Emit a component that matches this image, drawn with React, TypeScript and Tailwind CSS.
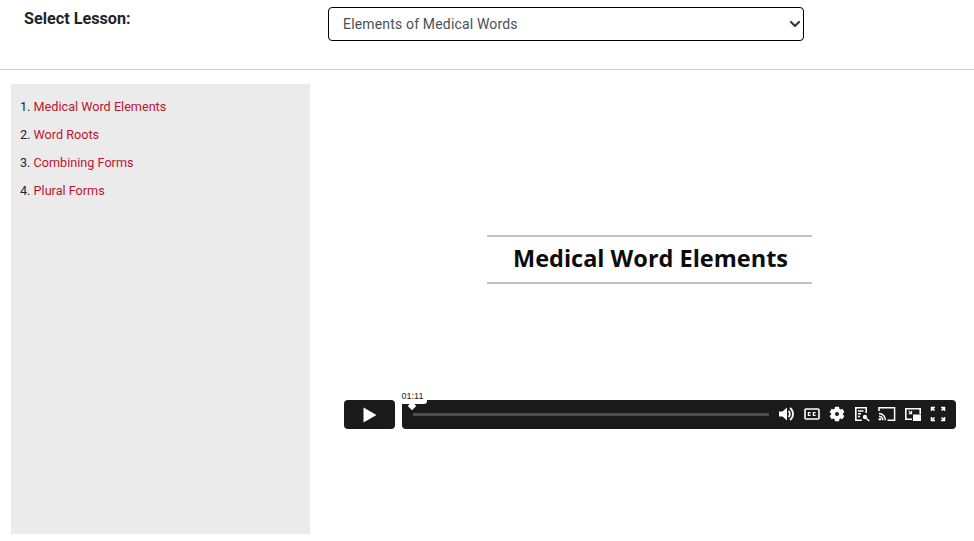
import { ChevronDown } from 'lucide-react';

const LESSONS = ['Medical Word Elements', 'Word Roots', 'Combining Forms', 'Plural Forms'];

function ControlIcons() {
  return (
    <div className="mb-[1px] flex items-center gap-[5px] pr-[8px] text-white">
      {/* volume */}
      <svg width="20" height="20" viewBox="0 0 20 20" fill="none">
        <path d="M2 7.5h3.5L10 3.5v13L5.5 12.5H2z" fill="white" />
        <path d="M11.5 7a4 4 0 0 1 0 6" stroke="white" strokeWidth="1.8" />
        <path d="M13 4a7.5 7.5 0 0 1 0 12" stroke="white" strokeWidth="1.8" />
      </svg>
      {/* captions */}
      <svg width="20" height="20" viewBox="0 0 20 20" fill="none">
        <rect x="3" y="5" width="14" height="10" rx="1" stroke="white" strokeWidth="1.6" />
        <path d="M8.6 8.6H6.4v2.8h2.2M13.6 8.6h-2.2v2.8h2.2" stroke="white" strokeWidth="1.2" />
      </svg>
      {/* settings */}
      <svg width="20" height="20" viewBox="0 0 20 20">
        <path
          fillRule="evenodd"
          d="M8 2.8h4l.4 2 1 .6 2-.7 2 3.4-1.6 1.3v1.2l1.6 1.3-2 3.4-2-.7-1 .6-.4 2H8l-.4-2-1-.6-2 .7-2-3.4 1.6-1.3V9.4L2.600 8.100l2-3.400 2 .7 1-.6zM10 8a2 2 0 1 0 0 4 2 2 0 0 0 0-4z"
          fill="white"
        />
      </svg>
      {/* transcript */}
      <svg width="20" height="20" viewBox="0 0 20 20" fill="none">
        <path d="M14.2 9V3.800H3.800v12.400h6" stroke="white" strokeWidth="1.6" />
        <path d="M6 7h5.500M6 9.800h3M6 12.500h2" stroke="white" strokeWidth="1.5" />
        <circle cx="13" cy="13" r="2.200" fill="white" />
        <path d="M14.500 14.500l2.800 2.500" stroke="white" strokeWidth="1.6" />
      </svg>
      {/* cast */}
      <svg width="20" height="20" viewBox="0 0 20 20" fill="none">
        <path d="M2 7V3.800h15.600v12.400H10.500" stroke="white" strokeWidth="1.5" />
        <path d="M2 9.400a6.600 6.600 0 0 1 6.400 6.800M2 12.200a4 4 0 0 1 3.800 4" stroke="white" strokeWidth="1.5" />
        <circle cx="2.900" cy="15.300" r="1.300" fill="white" />
      </svg>
      {/* picture in picture */}
      <svg width="20" height="20" viewBox="0 0 20 20" fill="none" className="ml-[1px]">
        <path d="M9 15.200H2.800V4.800h14.400V10" stroke="white" strokeWidth="1.600" />
        <rect x="10" y="10.500" width="8" height="6.500" fill="white" />
        <path d="M5.800 7l2.600 2.400M8.600 6.800v2.800H5.800" stroke="white" strokeWidth="1.100" />
      </svg>
      {/* fullscreen */}
      <svg width="20" height="20" viewBox="0 0 20 20" fill="none" stroke="white" strokeWidth="1.500">
        <path d="M3.500 7V3.500H7M3.500 3.500l3 3M16.500 7V3.500H13M16.500 3.500l-3 3M3.500 13v3.500H7M3.500 16.500l3-3M16.500 13v3.500H13M16.500 16.500l-3-3" />
      </svg>
    </div>
  );
}

function VideoPlayer() {
  return (
    <div className="relative h-[450px] flex-1 bg-white">
      <div className="ml-[177px] mt-[151px] flex h-[49px] w-[325px] items-center justify-center border-y-2 border-[#c2c2c2]">
        <span className="mb-[3px] ml-[2px] font-['Open_Sans',sans-serif] text-[23.5px] font-bold leading-[44px] text-[#0c0c0c]">Medical Word Elements</span>
      </div>

      <div className="absolute left-[34px] top-[316px] flex w-[612px] gap-[7px]">
        <button className="flex h-[29px] w-[51px] items-center justify-center rounded-[4px] bg-[#1a1a1a]">
          <svg width="14" height="16" viewBox="0 0 14 16">
            <path d="M0.5 0.5L13.5 8L0.5 15.5z" fill="white" />
          </svg>
        </button>
        <div className="relative flex h-[29px] flex-1 items-center rounded-[4px] bg-[#1a1a1a] pl-[11px]">
          <div className="h-[3px] flex-1 bg-[#4d4d4d]" />
          <div className="ml-[8px]">
            <ControlIcons />
          </div>
          {/* time tooltip */}
          <div className="absolute left-[-4px] top-[-10px] flex h-[14px] w-[29px] items-center justify-center rounded-b-[3px] bg-white font-['Liberation_Sans',sans-serif] text-[9px] text-[#222]">
            01:11
          </div>
          <div className="absolute left-[7px] top-[3px] h-[6px] w-[6px] rotate-45 bg-white" />
        </div>
      </div>
    </div>
  );
}

export default function App() {
  return (
    <div className="min-h-[541px] bg-white font-['Roboto',sans-serif]">
      <div className="flex h-[70px] border-b border-[#cccccc] pl-[24px] pt-[7px]">
        <label className="w-[304px] text-[16.2px] font-bold leading-[24px] text-[#212529]">Select Lesson:</label>
        <div className="relative h-[34px] w-[476px]">
          <select
            defaultValue="Elements of Medical Words"
            className="h-[34px] w-full appearance-none rounded-[4px] border border-black bg-white pl-[14px] text-[14px] tracking-[0.17px] text-[#495057]"
          >
            <option>Elements of Medical Words</option>
          </select>
          <ChevronDown
            size={16}
            strokeWidth={3.4}
            className="pointer-events-none absolute right-[1px] top-[9px] text-[#3c4043]"
          />
        </div>
      </div>

      <div className="flex pl-[11px] pt-[14px]">
        <div className="h-[450px] w-[299px] bg-[#ebebeb] px-[9px] pt-[9px]">
          <ol className="text-[12.65px] text-[#212529]">
            {LESSONS.map((lesson, i) => (
              <li key={lesson} className="h-[28px] leading-[28px]">
                {i + 1}. <a className="text-[#bb1530]">{lesson}</a>
              </li>
            ))}
          </ol>
        </div>
        <VideoPlayer />
      </div>
    </div>
  );
}
